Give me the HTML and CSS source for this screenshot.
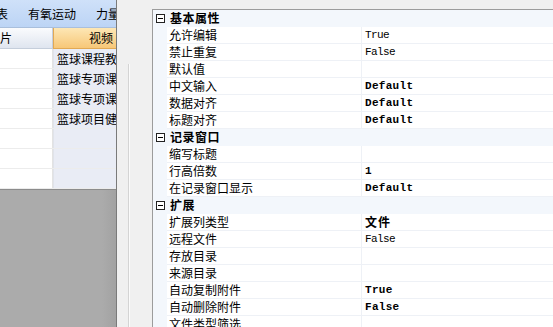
FILE: index.html
```html
<!DOCTYPE html>
<html>
<head>
<meta charset="utf-8">
<link rel="stylesheet" href="styles.css">
</head>
<body>
<div class="app">
  <div class="left">
    <div class="tabs">
      <span class="tab first">表</span>
      <span class="tab">有氧运动</span>
      <span class="tab">力量</span>
    </div>
    <div class="hrow">
      <div class="c1 hd"><span>图片</span></div>
      <div class="c2 hd sel"><span>视频</span></div>
    </div>
    <div class="drow"><div class="c1"></div><div class="c2">篮球课程教学视频</div></div>
    <div class="drow"><div class="c1"></div><div class="c2">篮球专项课程视频</div></div>
    <div class="drow"><div class="c1"></div><div class="c2">篮球专项课程训练</div></div>
    <div class="drow"><div class="c1"></div><div class="c2">篮球项目健身视频</div></div>
    <div class="drow"><div class="c1"></div><div class="c2"></div></div>
    <div class="drow"><div class="c1"></div><div class="c2"></div></div>
    <div class="drow"><div class="c1"></div><div class="c2"></div></div>
    <div class="empty"></div>
  </div>
  <div class="split">
    <div class="split-a"></div>
    <div class="split-line"></div>
    <div class="split-b"></div>
  </div>
  <div class="pg">
    <div class="row cat"><div class="m"><span class="tog"></span></div><div class="cn">基本属性</div></div>
    <div class="row"><div class="m"></div><div class="n">允许编辑</div><div class="v">True</div></div>
    <div class="row"><div class="m"></div><div class="n">禁止重复</div><div class="v">False</div></div>
    <div class="row"><div class="m"></div><div class="n">默认值</div><div class="v"></div></div>
    <div class="row"><div class="m"></div><div class="n">中文输入</div><div class="v b">Default</div></div>
    <div class="row"><div class="m"></div><div class="n">数据对齐</div><div class="v b">Default</div></div>
    <div class="row"><div class="m"></div><div class="n">标题对齐</div><div class="v b">Default</div></div>
    <div class="row cat"><div class="m"><span class="tog"></span></div><div class="cn">记录窗口</div></div>
    <div class="row"><div class="m"></div><div class="n">缩写标题</div><div class="v"></div></div>
    <div class="row"><div class="m"></div><div class="n">行高倍数</div><div class="v b">1</div></div>
    <div class="row"><div class="m"></div><div class="n">在记录窗口显示</div><div class="v b">Default</div></div>
    <div class="row cat"><div class="m"><span class="tog"></span></div><div class="cn">扩展</div></div>
    <div class="row"><div class="m"></div><div class="n">扩展列类型</div><div class="v bc">文件</div></div>
    <div class="row"><div class="m"></div><div class="n">远程文件</div><div class="v">False</div></div>
    <div class="row"><div class="m"></div><div class="n">存放目录</div><div class="v"></div></div>
    <div class="row"><div class="m"></div><div class="n">来源目录</div><div class="v"></div></div>
    <div class="row"><div class="m"></div><div class="n">自动复制附件</div><div class="v b">True</div></div>
    <div class="row"><div class="m"></div><div class="n">自动删除附件</div><div class="v b">False</div></div>
    <div class="row"><div class="m"></div><div class="n">文件类型筛选</div><div class="v"></div></div>
  </div>
</div>
</body>
</html>
```
FILE: styles.css
```css
html, body {
  margin: 0;
  padding: 0;
  width: 553px;
  height: 327px;
  overflow: hidden;
  background: #f0f0f0;
}
body {
  font-family: "Noto Sans CJK SC", "Liberation Sans", sans-serif;
  font-size: 12px;
  color: #000;
}
.app {
  display: flex;
  height: 327px;
}
.left {
  width: 116px;
  flex: none;
  display: flex;
  flex-direction: column;
  overflow: hidden;
  border-right: 1px solid #7a7a7a;
  background: #ababab;
}
.tabs {
  height: 28px;
  flex: none;
  display: flex;
  align-items: center;
  gap: 20px;
  background: linear-gradient(#cfe1f9, #bcd4f5);
  border-bottom: 1px solid #a9bfdc;
  line-height: 14px;
  white-space: nowrap;
  padding-top: 1px;
  box-sizing: border-box;
}
.tab { flex: none; }
.tab.first { margin-left: -4px; }
.hrow {
  height: 21px;
  flex: none;
  display: flex;
  box-sizing: border-box;
}
.c1 {
  width: 53px;
  flex: none;
  overflow: hidden;
  background: #fff;
  border-right: 1px solid #e3e3e3;
  box-sizing: border-box;
}
.c2 {
  flex: none;
  width: 63px;
  overflow: hidden;
  white-space: nowrap;
  background: #e9ecf5;
  padding-left: 3px;
  box-sizing: border-box;
}
.hd {
  display: flex;
  justify-content: flex-end;
  align-items: center;
  white-space: nowrap;
  line-height: 14px;
}
.c1.hd {
  background: linear-gradient(#fafbfd, #dfe5ef);
  border-bottom: 1px solid #c5cedb;
  border-right: 1px solid #c5cedb;
  padding-right: 40px;
}
.c2.hd.sel {
  background: linear-gradient(#fde7b5, #f7c778);
  border-left: 1px solid #e2a954;
  border-bottom: 1px solid #e2a954;
  padding-right: 3px;
  padding-left: 0;
}
.drow {
  height: 20px;
  flex: none;
  display: flex;
  border-bottom: 1px solid #ececec;
  box-sizing: border-box;
  line-height: 19px;
}
.drow .c2 { border-left: 1px solid #e0e3ea; }
.empty {
  flex: 1;
  background: linear-gradient(90deg, #ababab 0, #ababab 88%, #a2a2a2 100%);
  border-top: 1px solid #8c8c8c;
}
.split {
  width: 35px;
  flex: none;
  display: flex;
  background: #f0f0f0;
}
.split-a { width: 11px; }
.split-line {
  width: 1px;
  margin-top: 64px;
  background: #d4d4d4;
  box-shadow: 1px 0 0 #fbfbfb;
}
.split-b { flex: 1; }
.pg {
  flex: 1;
  margin-top: 9px;
  border-top: 1px solid #9c9c9c;
  border-left: 1px solid #9c9c9c;
  background: #fff;
  overflow: hidden;
}
.row {
  height: 17px;
  display: flex;
  line-height: 16px;
  white-space: nowrap;
}
.m {
  width: 14px;
  flex: none;
  background: #f3f7fc;
  display: flex;
  align-items: center;
  justify-content: center;
  padding-left: 1px;
  box-sizing: border-box;
}
.n {
  width: 195px;
  flex: none;
  padding-left: 2px;
  border-right: 1px solid #eef1f6;
  border-bottom: 1px solid #eef1f6;
  box-sizing: border-box;
}
.v {
  flex: 1;
  padding-left: 3px;
  border-bottom: 1px solid #eef1f6;
  font-family: "Liberation Mono", monospace;
  font-size: 11px;
  letter-spacing: -0.6px;
}
.v.b {
  font-weight: bold;
  letter-spacing: 0.3px;
}
.v.bc {
  font-family: "Noto Sans CJK SC", sans-serif;
  font-size: 12px;
  font-weight: bold;
  letter-spacing: 1px;
}
.row.cat {
  background: #f3f7fc;
}
.cn {
  flex: 1;
  padding-left: 3px;
  font-weight: bold;
  letter-spacing: 0.5px;
}
.tog {
  width: 9px;
  height: 9px;
  border: 1px solid #222;
  box-sizing: border-box;
  position: relative;
  background: #fff;
  display: block;
}
.tog::after {
  content: "";
  position: absolute;
  left: 1px;
  right: 1px;
  top: 3px;
  height: 1px;
  background: #000;
}
```
